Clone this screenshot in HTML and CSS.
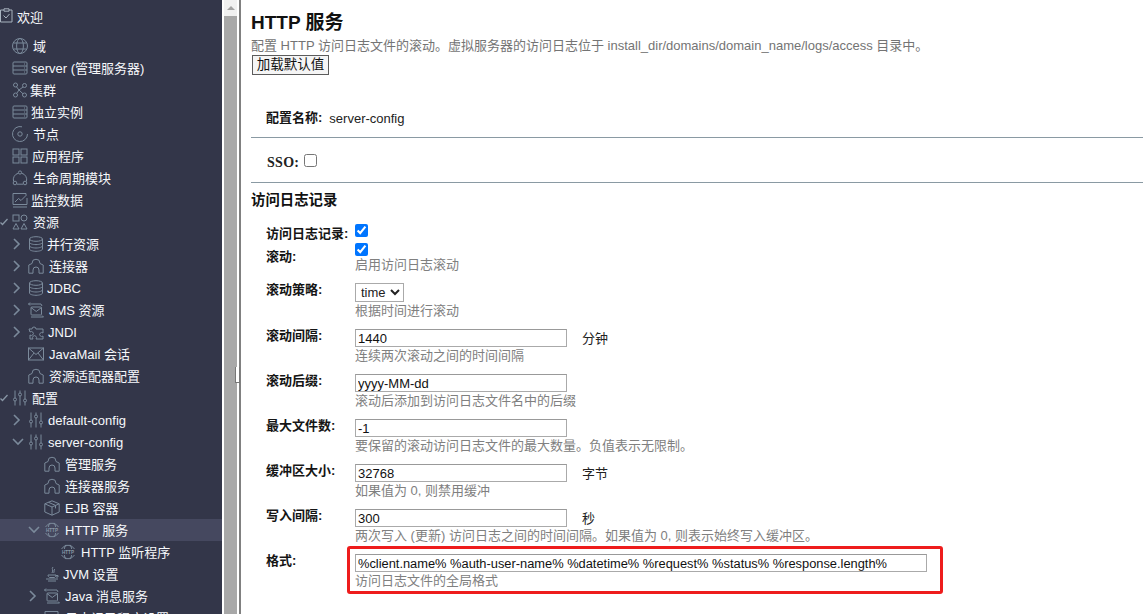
FILE: index.html
```html
<!DOCTYPE html>
<html lang="zh">
<head>
<meta charset="utf-8">
<title>HTTP 服务</title>
<link rel="stylesheet" href="styles.css">
</head>
<body>
<svg class="defs" width="0" height="0">
<defs>
<symbol id="i-server" viewBox="0 0 16 16"><rect x="1" y="2" width="14" height="12" rx="1"/><path d="M1 6h14M1 10h14M12 4h1M12 8h1M12 12h1"/></symbol>
<symbol id="i-globe" viewBox="0 0 16 16"><circle cx="8" cy="8" r="7.500"/><ellipse cx="8" cy="8" rx="3.400" ry="7.500"/><path d="M1.500 5h13M1.500 11h13"/></symbol>
<symbol id="i-cluster" viewBox="0 0 16 16"><circle cx="3.500" cy="3" r="2"/><circle cx="12.500" cy="3.500" r="2"/><circle cx="3.500" cy="13" r="2"/><circle cx="12.500" cy="13" r="2"/><path d="M4.500 4.800 7 8l-2.300 3.400M11 5 7 8l4 3.800"/></symbol>
<symbol id="i-node" viewBox="0 0 16 16"><path d="M10 .8A7.500 7.500 0 1 0 15.500 8"/><circle cx="8" cy="8" r="2.200"/></symbol>
<symbol id="i-apps" viewBox="0 0 16 16"><rect x="1" y="1" width="6" height="6"/><rect x="9" y="1" width="6" height="6"/><rect x="1" y="9" width="6" height="6"/><rect x="9" y="9" width="6" height="6"/></symbol>
<symbol id="i-life" viewBox="0 0 16 16"><circle cx="8" cy="2.500" r="1.600"/><circle cx="3" cy="13" r="1.800"/><circle cx="13" cy="13" r="1.800"/><path d="M6.500 3.200A6.500 6.500 0 0 0 1.600 11.500M9.500 3.200a6.500 6.500 0 0 1 4.900 8.300M5 14.200h6"/></symbol>
<symbol id="i-chart" viewBox="0 0 16 16"><path d="M14 3V1.500H1V12.500H15V6M1 15h14M3 10l3.500-3.500 2.500 2L14.500 3"/></symbol>
<symbol id="i-res" viewBox="0 0 16 16"><rect x="1" y="1" width="6" height="6"/><circle cx="12" cy="4" r="3"/><path d="M4 9.500 7 15H1zM12 9.500 15 15H9z"/></symbol>
<symbol id="i-db" viewBox="0 0 16 16"><ellipse cx="8" cy="3" rx="6.500" ry="2.300"/><path d="M1.500 3v10c0 1.300 3 2.300 6.500 2.300s6.500-1 6.500-2.300V3M1.500 6.300c0 1.300 3 2.300 6.500 2.300s6.500-1 6.500-2.300M1.500 9.700c0 1.300 3 2.300 6.500 2.300s6.500-1 6.500-2.300"/></symbol>
<symbol id="i-conn" viewBox="0 0 16 16"><path d="M.8 15.200V7L4 5.500 5 2.200Q8 .3 11 2.200L12 5.500 15.200 7V15.200H11V12A3 3 0 0 0 5 12V15.200Z" stroke-linejoin="round"/></symbol>
<symbol id="i-jms" viewBox="0 0 16 16"><path d="M2 .5.500 2 2 3.500M.5 2H13l1 2"/><rect x="3" y="5" width="10.500" height="8" rx=".8"/><path d="m3 5.500 5.250 4 5.250-4M3 15h12.500L14 13.500"/></symbol>
<symbol id="i-jndi" viewBox="0 0 16 16"><path d="M1 5h3a2 2 0 1 1 4 0h7v4a2 2 0 1 0 0 3v3H8a2 2 0 1 0-3 0H2v-4a2 2 0 1 0 0-3z"/></symbol>
<symbol id="i-mail" viewBox="0 0 16 16"><rect x=".5" y="2" width="15" height="12"/><path d="m.5 2 7.500 6.500L15.500 2M.5 14l5.500-7M15.500 14 10 7"/></symbol>
<symbol id="i-conf" viewBox="0 0 16 16"><path d="M3 .5V8M3 11v4.500M8 .5V3M8 6v9.500M13 .5V9M13 12v3.500"/><circle cx="3" cy="9.500" r="1.500"/><circle cx="8" cy="4.500" r="1.500"/><circle cx="13" cy="10.500" r="1.500"/></symbol>
<symbol id="i-box" viewBox="0 0 16 16"><path d="M8 .8l7.200 3V12L8 15.200.8 12V3.800zM.8 3.800 8 7l7.200-3.200M8 7v8.200M4.500 2.300l7 3.100v3"/></symbol>
<symbol id="i-http" viewBox="0 0 16 16"><path d="M1.500 5a7.500 7.500 0 0 1 13 0M1.500 11a7.500 7.500 0 0 0 13 0M6 .8Q4.500 3 4.300 5M10 .8q1.500 2.200 1.700 4.200M6 15.200Q4.500 13 4.300 11M10 15.200q1.500-2.200 1.700-4.200"/><text class="ht" x="8" y="9.800" text-anchor="middle">HTTP</text></symbol>
<symbol id="i-java" viewBox="0 0 16 16"><path d="M9 1C7 3 10 4 8 7M11 3C9 4 11 6 9.500 7M4 9h8c0 1-.5 2-1.500 2.500h-5C4.500 11 4 10 4 9zM12 9.500h2v1.500h-2M2 13h12M4 15h8"/></symbol>
</defs>
</svg>
<div class="app">
  <nav class="side">
    <div class="tree">
      <div class="row welcome"><svg class="ic ic-welcome" viewBox="0 0 13 15"><path d="M4 2H.5v12h11.500V2H9M4 .8h5v2.400H4zM3.500 7.500 6 10l3.500-4"/></svg><span>欢迎</span></div>
      <div class="row l1 first"><svg class="ic"><use href="#i-globe"/></svg><span class="g5">域</span></div>
      <div class="row l1"><svg class="ic"><use href="#i-server"/></svg><span class="g3">server (管理服务器)</span></div>
      <div class="row l1"><svg class="ic"><use href="#i-cluster"/></svg><span class="g2">集群</span></div>
      <div class="row l1"><svg class="ic"><use href="#i-server"/></svg><span class="g3">独立实例</span></div>
      <div class="row l1"><svg class="ic"><use href="#i-node"/></svg><span class="g5">节点</span></div>
      <div class="row l1"><svg class="ic"><use href="#i-apps"/></svg><span class="g4">应用程序</span></div>
      <div class="row l1"><svg class="ic"><use href="#i-life"/></svg><span class="g5">生命周期模块</span></div>
      <div class="row l1"><svg class="ic"><use href="#i-chart"/></svg><span class="g3">监控数据</span></div>
      <div class="row l1"><svg class="tick" viewBox="0 0 8 8"><path d="M.5 4.500 2.500 6.500 7.500 1"/></svg><svg class="ic"><use href="#i-res"/></svg><span class="g5">资源</span></div>
      <div class="row l2"><svg class="arrow" viewBox="0 0 8 12"><path d="m1 1 5 5-5 5"/></svg><svg class="ic"><use href="#i-db"/></svg><span class="g3">并行资源</span></div>
      <div class="row l2"><svg class="arrow" viewBox="0 0 8 12"><path d="m1 1 5 5-5 5"/></svg><svg class="ic"><use href="#i-conn"/></svg><span class="g5">连接器</span></div>
      <div class="row l2"><svg class="arrow" viewBox="0 0 8 12"><path d="m1 1 5 5-5 5"/></svg><svg class="ic"><use href="#i-db"/></svg><span class="g3 en">JDBC</span></div>
      <div class="row l2"><svg class="arrow" viewBox="0 0 8 12"><path d="m1 1 5 5-5 5"/></svg><svg class="ic"><use href="#i-jms"/></svg><span class="g5">JMS 资源</span></div>
      <div class="row l2"><svg class="arrow" viewBox="0 0 8 12"><path d="m1 1 5 5-5 5"/></svg><svg class="ic"><use href="#i-jndi"/></svg><span class="g4 en">JNDI</span></div>
      <div class="row l2b"><svg class="ic"><use href="#i-mail"/></svg><span class="g5">JavaMail 会话</span></div>
      <div class="row l2b"><svg class="ic"><use href="#i-conn"/></svg><span class="g5">资源适配器配置</span></div>
      <div class="row l1"><svg class="tick" viewBox="0 0 8 8"><path d="M.5 4.500 2.500 6.500 7.500 1"/></svg><svg class="ic"><use href="#i-conf"/></svg><span class="g4">配置</span></div>
      <div class="row l2"><svg class="arrow" viewBox="0 0 8 12"><path d="m1 1 5 5-5 5"/></svg><svg class="ic"><use href="#i-conf"/></svg><span class="g4 en">default-config</span></div>
      <div class="row l2"><svg class="arrow down" viewBox="0 0 12 8"><path d="m1 1 5 5 5-5"/></svg><svg class="ic"><use href="#i-conf"/></svg><span class="g4 en">server-config</span></div>
      <div class="row l3b"><svg class="ic"><use href="#i-conn"/></svg><span class="g5">管理服务</span></div>
      <div class="row l3b"><svg class="ic"><use href="#i-conn"/></svg><span class="g5">连接器服务</span></div>
      <div class="row l3b"><svg class="ic"><use href="#i-box"/></svg><span class="g5">EJB 容器</span></div>
      <div class="row l3 active"><svg class="arrow down" viewBox="0 0 12 8"><path d="m1 1 5 5 5-5"/></svg><svg class="ic"><use href="#i-http"/></svg><span class="g5">HTTP 服务</span></div>
      <div class="row l4"><svg class="ic"><use href="#i-http"/></svg><span class="g5">HTTP 监听程序</span></div>
      <div class="row l3b"><svg class="ic"><use href="#i-java"/></svg><span class="g3">JVM 设置</span></div>
      <div class="row l3"><svg class="arrow" viewBox="0 0 8 12"><path d="m1 1 5 5-5 5"/></svg><svg class="ic"><use href="#i-jms"/></svg><span class="g5">Java 消息服务</span></div>
      <div class="row l3b"><svg class="ic"><use href="#i-chart"/></svg><span class="g5">日志记录程序设置</span></div>
    </div>
  </nav>
  <div class="scroll">
    <div class="scroll-up"><span class="up-tri"></span></div>
    <div class="scroll-thumb"></div>
  </div>
  <div class="splitter"><span class="grip"></span></div>
  <main class="main">
    <h1 class="title">HTTP 服务</h1>
    <p class="desc">配置 HTTP 访问日志文件的滚动。虚拟服务器的访问日志位于 install_dir/domains/domain_name/logs/access 目录中。</p>
    <button class="btn" type="button">加载默认值</button>
    <div class="config-row"><label class="lbl">配置名称:</label><span class="val">server-config</span></div>
    <div class="sso-row"><label class="sso">SSO:</label><input type="checkbox" class="chk chk-sso"></div>
    <h2 class="section">访问日志记录</h2>
    <div class="form">
      <div class="f f-log"><label class="lbl">访问日志记录:</label><div class="fv"><input type="checkbox" class="chk" checked></div></div>
      <div class="f f-roll"><label class="lbl">滚动:</label><div class="fv"><input type="checkbox" class="chk" checked><div class="help">启用访问日志滚动</div></div></div>
      <div class="f f-pol"><label class="lbl">滚动策略:</label><div class="fv"><select class="sel"><option>time</option></select><div class="help">根据时间进行滚动</div></div></div>
      <div class="f"><label class="lbl">滚动间隔:</label><div class="fv"><div class="line"><input class="txt" value="1440"><span class="unit">分钟</span></div><div class="help">连续两次滚动之间的时间间隔</div></div></div>
      <div class="f"><label class="lbl">滚动后缀:</label><div class="fv"><input class="txt" value="yyyy-MM-dd"><div class="help">滚动后添加到访问日志文件名中的后缀</div></div></div>
      <div class="f"><label class="lbl">最大文件数:</label><div class="fv"><input class="txt" value="-1"><div class="help">要保留的滚动访问日志文件的最大数量。负值表示无限制。</div></div></div>
      <div class="f"><label class="lbl">缓冲区大小:</label><div class="fv"><div class="line"><input class="txt" value="32768"><span class="unit">字节</span></div><div class="help">如果值为 0, 则禁用缓冲</div></div></div>
      <div class="f"><label class="lbl">写入间隔:</label><div class="fv"><div class="line"><input class="txt" value="300"><span class="unit">秒</span></div><div class="help">两次写入 (更新) 访问日志之间的时间间隔。如果值为 0, 则表示始终写入缓冲区。</div></div></div>
      <div class="f f-fmt"><label class="lbl">格式:</label><div class="fv"><input class="txt wide" value="%client.name% %auth-user-name% %datetime% %request% %status% %response.length%"><div class="help">访问日志文件的全局格式</div></div><span class="redbox"></span></div>
    </div>
  </main>
</div>
</body>
</html>
```

FILE: styles.css
```css
* { box-sizing: border-box; }
html, body { margin: 0; height: 100%; overflow: hidden; }
body { font-family: "Liberation Sans", "Noto Sans CJK SC", sans-serif; font-size: 13px; color: #151515; background: #fff; }
.defs { position: absolute; }
.app { display: flex; height: 614px; overflow: hidden; }

.side { width: 222px; flex: none; background: #333649; overflow: hidden; }
.tree { padding-top: 6px; }
.row { display: flex; align-items: center; height: 22px; position: relative; font-size: 13px; white-space: nowrap; }
.row span { color: #f6f8fb; margin-bottom: 2px; }
.row span.en { margin-bottom: 0; }
.row .ic { width: 16px; height: 16px; flex: none; fill: none; stroke: #7b8a9b; stroke-width: 1; overflow: visible; }
.ht { fill: #8a97a6; stroke: none; font: 700 4.600px "Liberation Sans", sans-serif; }
.welcome .ic.ic-welcome { width: 13px; height: 15px; margin-right: 4px; margin-top: -4px; stroke: #a8b3bf; }
.l1 { padding-left: 12px; }
.l2 { padding-left: 13px; }
.first { margin-top: 7px; }
.l2b { padding-left: 28px; }
.l3 { padding-left: 29px; }
.l3b { padding-left: 44px; }
.l4 { padding-left: 60px; }
.g2 { margin-left: 2px; }
.g3 { margin-left: 3px; }
.g4 { margin-left: 4px; }
.g5 { margin-left: 5px; }
.arrow { width: 8px; height: 12px; flex: none; margin-right: 7px; fill: none; stroke: #7b8a9b; stroke-width: 1.600; }
.arrow.down { width: 12px; height: 8px; margin-right: 4px; margin-left: -1px; }
.tick { position: absolute; left: 0; top: 7px; width: 8px; height: 8px; fill: none; stroke: #8896a5; stroke-width: 1.300; }
.active { background: #45485f; }

.scroll { width: 15px; margin-left: 2px; flex: none; background: #fff; }
.scroll-up { width: 13px; height: 16px; background: #f1f1f1; display: flex; align-items: center; justify-content: center; }
.up-tri { width: 0; height: 0; border: 4px solid transparent; border-top: 0; border-bottom: 4px solid #a3a3a3; }
.scroll-thumb { height: 598px; width: 13px; background: #a8a8a8; }

.splitter { width: 0; flex: none; position: relative; }
.grip { position: absolute; z-index: 1; left: -4px; top: 367px; width: 5px; height: 16px; border: 1px solid #777; border-top: 0; background: #fff; }

.main { flex: 1; min-width: 0; border-left: 2px solid #808080; padding: 11px 0 0 10px; line-height: 1; }
.title { margin: 0; font-size: 19px; font-weight: 700; line-height: 24px; color: #111; }
.desc { margin: 3px 0 0; font-size: 13px; line-height: 16px; color: #747474; white-space: nowrap; }
.btn { display: block; margin: 1px 0 0 1px; height: 20px; width: 77px; padding: 0 0 1px; background: #f5f5f5; border: 1px solid #5c5c5c; border-radius: 0; font: 13.500px/14px "Liberation Sans", "Noto Sans CJK SC", sans-serif; color: #111; }
.lbl { font-size: 13px; font-weight: 700; color: #151515; line-height: 16px; }
.config-row { display: flex; align-items: center; height: 63px; padding: 24px 0 0 15px; border-bottom: 1px solid #8a9aa3; }
.config-row .val { margin-left: 7px; font-size: 13px; color: #222; }
.sso-row { display: flex; align-items: flex-start; height: 45px; padding: 16px 0 0 16px; border-bottom: 1px solid #8a9aa3; }
.sso { font-family: "Liberation Serif", serif; font-size: 14px; font-weight: 700; letter-spacing: .3px; line-height: 18px; color: #222; }
.chk { width: 13px; height: 13px; margin: 0; accent-color: #0075ff; }
.chk-sso { margin-left: 5px; }
.section { margin: 8px 0 0; font-size: 14.400px; font-weight: 700; line-height: 18px; color: #111; }

.form { padding: 15px 0 0 15px; }
.f { display: flex; height: 45px; position: relative; }
.f .lbl { width: 89px; flex: none; margin-top: -1px; }
.f-log { height: 19px; }
.f-log .lbl { padding-top: 3px; }
.f-roll { height: 40px; }
.f-roll .lbl { padding-top: 7px; }
.f-pol { height: 46px; }
.fv { display: flex; flex-direction: column; align-items: flex-start; }
.help { margin-top: 1px; font-size: 13px; line-height: 16px; color: #808080; white-space: nowrap; }
.sel { width: 49px; height: 19px; padding: 0 0 0 1px; font: 13px "Liberation Sans", sans-serif; background: #fff; border: 1px solid #aaa; color: #222; }
.txt { width: 212px; height: 18px; padding: 1px 2px; border: 1px solid #aaa; border-top-color: #999; font: 13px "Liberation Sans", sans-serif; color: #111; background: #fff; }
.txt.wide { width: 572px; font-size: 12.850px; }
.line { display: flex; align-items: center; }
.unit { margin-left: 15px; font-size: 13px; color: #222; }
.redbox { position: absolute; left: 81px; top: -8px; width: 596px; height: 48px; border: 3px solid #ee1c1c; border-radius: 3px; }
```
